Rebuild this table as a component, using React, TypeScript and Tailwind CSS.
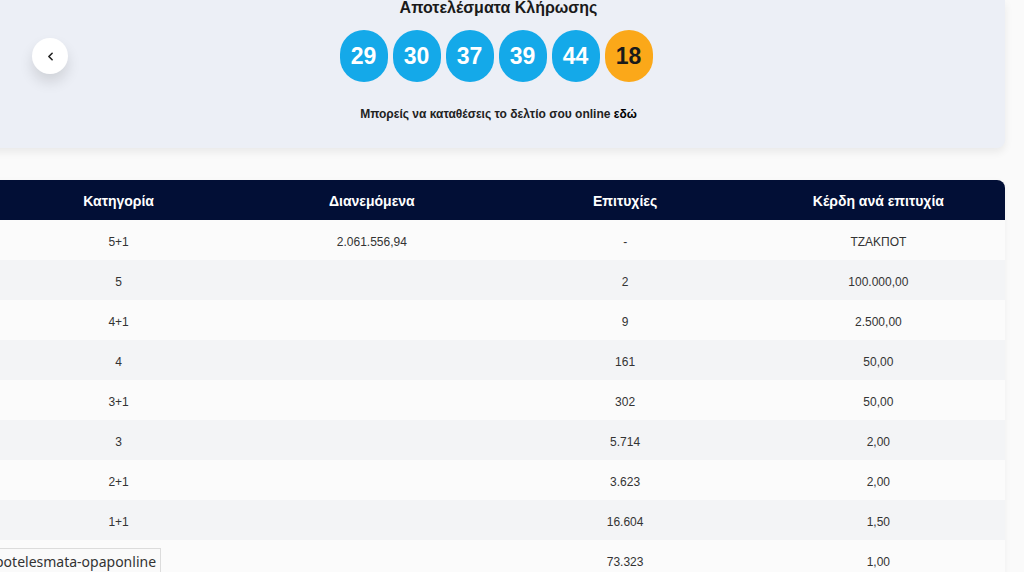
import { ChevronLeft } from 'lucide-react';

type Row = {
  category: string;
  distributed: string;
  winners: string;
  prize: string;
};

const balls = [
  { n: '29', bonus: false },
  { n: '30', bonus: false },
  { n: '37', bonus: false },
  { n: '39', bonus: false },
  { n: '44', bonus: false },
  { n: '18', bonus: true }
];

const rows: Row[] = [
  { category: '5+1', distributed: '2.061.556,94', winners: '-', prize: 'ΤΖΑΚΠΟΤ' },
  { category: '5', distributed: '', winners: '2', prize: '100.000,00' },
  { category: '4+1', distributed: '', winners: '9', prize: '2.500,00' },
  { category: '4', distributed: '', winners: '161', prize: '50,00' },
  { category: '3+1', distributed: '', winners: '302', prize: '50,00' },
  { category: '3', distributed: '', winners: '5.714', prize: '2,00' },
  { category: '2+1', distributed: '', winners: '3.623', prize: '2,00' },
  { category: '1+1', distributed: '', winners: '16.604', prize: '1,50' },
  { category: '', distributed: '', winners: '73.323', prize: '1,00' }
];

const headers = ['Κατηγορία', 'Διανεμόμενα', 'Επιτυχίες', 'Κέρδη ανά επιτυχία'];

function App() {
  return (
    <div className="relative h-[572px] overflow-hidden bg-[#fafafa] font-['Liberation_Sans',Arial,sans-serif] text-[#222]">
      <div className="ml-[-8px] w-[1013px]">
        {/* results panel */}
        <div className="relative flex h-[148px] flex-col items-center rounded-br-lg bg-[#eceff6] shadow-[0_4px_8px_rgba(0,0,0,0.07)]">
          <button className="absolute left-[40px] top-[38px] flex h-[36px] w-[36px] items-center justify-center rounded-full bg-white shadow-[0_8px_14px_rgba(0,0,0,0.12)]">
            <ChevronLeft className="h-[13px] w-[13px] text-[#222]" strokeWidth={3} />
          </button>
          <h1 className="mt-[-2px] h-[20px] text-[16px] font-bold leading-[20px] text-[#1a1a1a]">Αποτελέσματα Κλήρωσης</h1>
          <div className="ml-[-5px] mt-[12px] flex gap-[5px]">
            {balls.map((b) => (
              <div
                key={b.n}
                className={`flex h-[52px] w-[48px] items-center justify-center rounded-full text-[23px] font-bold ${
                  b.bonus ? 'bg-[#fba819] text-[#1a1a1a]' : 'bg-[#14a9e9] text-white'
                }`}
              >
                {b.n}
              </div>
            ))}
          </div>
          <p className="mt-[24px] text-[12px] font-semibold leading-[16px] text-[#222]">
            Μπορείς να καταθέσεις το δελτίο σου online <span className="font-black text-black">εδώ</span>
          </p>
        </div>

        {/* prize table */}
        <div className="mt-[32px] overflow-hidden rounded-tr-lg shadow-[0_2px_6px_rgba(0,0,0,0.05)]">
          <div className="grid h-[40px] grid-cols-4 items-center bg-[#020f36] pt-[3px] text-[14px] font-bold text-white">
            {headers.map((h) => (
              <div key={h} className="text-center">{h}</div>
            ))}
          </div>
          {rows.map((r, i) => (
            <div
              key={i}
              className={`grid h-[40px] grid-cols-4 items-center pt-[3px] text-[12px] text-[#333] ${
                i % 2 === 0 ? 'bg-[#fbfbfb]' : 'bg-[#f3f4f6]'
              }`}
            >
              <div className="text-center">{r.category}</div>
              <div className="text-center">{r.distributed}</div>
              <div className="text-center">{r.winners}</div>
              <div className="text-center">{r.prize}</div>
            </div>
          ))}
        </div>
      </div>

      {/* link tooltip */}
      <div className="absolute left-[-6px] top-[548px] h-[30px] border border-[#dcdcdc] bg-[#fafafa] pr-[4px] pt-[3px] font-['Noto_Sans',sans-serif] text-[14px] leading-[20px] text-[#333]">
        potelesmata-opaponline
      </div>
    </div>
  );
}

export default App;
